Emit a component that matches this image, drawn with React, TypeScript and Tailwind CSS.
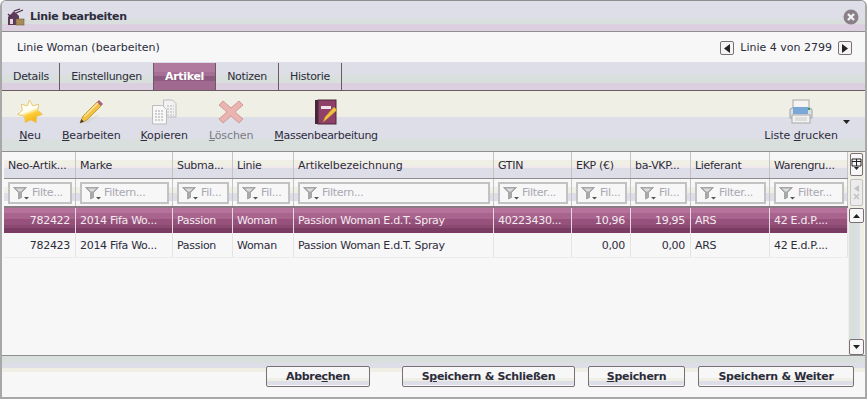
import type { ReactNode } from 'react'

const headers = ['Neo-Artik...', 'Marke', 'Subma...', 'Linie', 'Artikelbezeichnung', 'GTIN', 'EKP (€)', 'ba-VKP...', 'Lieferant', 'Warengru...']
const filters = ['Filte...', 'Filtern...', 'Fil...', 'Fil...', 'Filtern...', 'Filter...', 'Fil...', 'Fil...', 'Filter...', 'Filter...']

const rows = [
  ['782422', '2014 Fifa Wo...', 'Passion', 'Woman', 'Passion Woman E.d.T. Spray', '40223430...', '10,96', '19,95', 'ARS', '42 E.d.P....'],
  ['782423', '2014 Fifa Wo...', 'Passion', 'Woman', 'Passion Woman E.d.T. Spray', '', '0,00', '0,00', 'ARS', '42 E.d.P....'],
]

const gridCols = 'grid grid-cols-[72px_97px_60px_61px_200px_78px_59px_60px_79px_78px]'
const rightAligned = [0, 6, 7]

function Funnel() {
  return (
    <svg width="16" height="14" viewBox="0 0 16 14" className="shrink-0">
      <path d="M0.5 1.5h13l-5 5v5l-3 1.5v-6.500z" fill="#a9a9a9" stroke="#8a8a8a" strokeWidth="0.6" />
      <path d="M3 2.500h8l-3 3h-2z" fill="#dcdcdc" />
      <path d="M11 11h5l-2.500 2.500z" fill="#555" />
    </svg>
  )
}

function StarIcon() {
  return (
    <svg width="26" height="26" viewBox="0 0 26 26">
      <defs>
        <linearGradient id="starFill" x1="0.3" y1="0.2" x2="0.6" y2="0.9">
          <stop offset="0.4" stopColor="#fffdf0" />
          <stop offset="0.62" stopColor="#fbcf3a" />
          <stop offset="1" stopColor="#f6b417" />
        </linearGradient>
      </defs>
      <path
        d="M12.500 1l3.200 5.800 6-1.600-.9 6.200 4.700 3.900-5.800 2.200-.5 6.200-5.500-2.700-5.500 2.700-.5-6.200L.6 15.300l4.700-3.900-.9-6.200 6 1.600z"
        fill="url(#starFill)"
        stroke="#e3c877"
        strokeWidth="1"
        strokeLinejoin="round"
      />
    </svg>
  )
}

function PencilIcon() {
  return (
    <svg width="26" height="26" viewBox="0 0 26 26">
      <path d="M3 24l19-9-12 9z" fill="#d5d3d3" opacity="0.8" />
      <path d="M2 24l3-7L19 3l4 4L9 21z" fill="#f2c141" stroke="#b58a2a" strokeWidth="0.7" />
      <path d="M6 17L20 3l1 1L7 18z" fill="#fbe6a0" />
      <path d="M2 24l1.300-4 2.700 2.700z" fill="#4c3b2b" />
      <path d="M19 3l2-2 4 4-2 2z" fill="#a8607a" />
    </svg>
  )
}

function CopyIcon() {
  return (
    <svg width="26" height="26" viewBox="0 0 26 26">
      <path d="M12.500 1h9l3.500 3.500V18H12.500z" fill="#f2f2f2" stroke="#bcbcbc" />
      <path d="M16 7h7M16 10h7M16 13h7M16 16h7" stroke="#b5b5b5" strokeDasharray="2 1" />
      <path d="M1.500 6.500h10l4 4V25H1.500z" fill="#f7f7f7" stroke="#bcbcbc" />
      <path d="M4 12h9M4 15h9M4 18h9M4 21h9" stroke="#a8a8a8" strokeDasharray="2 1" />
    </svg>
  )
}

function DeleteIcon() {
  return (
    <svg width="26" height="26" viewBox="0 0 26 26">
      <path d="M5 2l8 7 8-7 4 4-8 7 8 7-4 4-8-7-8 7-4-4 8-7-8-7z" fill="#eab4b0" stroke="#cf9a98" strokeWidth="1" strokeLinejoin="round" />
    </svg>
  )
}

function BookIcon() {
  return (
    <svg width="24" height="26" viewBox="0 0 24 26">
      <rect x="1" y="1" width="3" height="24" fill="#3f2a34" />
      <rect x="4" y="1" width="18" height="24" fill="#8f3f68" stroke="#4a2a3a" />
      <rect x="7" y="7" width="10" height="3" fill="#efe3ea" />
      <path d="M9 23l2-5 9-10 3 3-10 9z" fill="#f2c141" stroke="#b58a2a" strokeWidth="0.5" />
    </svg>
  )
}

function PrinterIcon() {
  return (
    <svg width="26" height="26" viewBox="0 0 26 26">
      <rect x="5" y="1" width="16" height="8" fill="#f4f4f4" stroke="#a8a8a8" />
      <path d="M2 11q0-2 3-2h16q3 0 3 2v8H2z" fill="#dcdfe2" stroke="#a0a4a8" />
      <rect x="5" y="8" width="15" height="7" fill="#79a8d8" />
      <rect x="20" y="9" width="2" height="2" fill="#2e9e4e" />
      <rect x="4" y="16" width="18" height="8" fill="#f2f2f2" stroke="#a8a8a8" />
      <path d="M7 19h12M7 21h12" stroke="#c8c8c8" />
    </svg>
  )
}

function AppIcon() {
  return (
    <svg width="18" height="18" viewBox="0 0 18 18">
      <path d="M1 17V9l6-6 5 5v9z" fill="#5d3a58" />
      <path d="M7 3l6-2M9 5l7-3M4 9L1 6" stroke="#4d2a48" strokeWidth="1.300" />
      <rect x="9" y="11" width="8" height="6" fill="#a98a5a" stroke="#6f5a3a" strokeWidth="0.6" />
      <rect x="3" y="11" width="3" height="5" fill="#e6d8e0" />
    </svg>
  )
}

function CloseIcon() {
  return (
    <svg width="16" height="16" viewBox="0 0 16 16">
      <circle cx="8" cy="8" r="7.500" fill="#8a8088" />
      <path d="M5 5l6 6M11 5l-6 6" stroke="#f2f2f2" strokeWidth="2.400" />
    </svg>
  )
}

function NavButton({ dir }: { dir: 'left' | 'right' }) {
  return (
    <div className="flex h-[14px] w-[14px] items-center justify-center rounded-[2px] border border-[#7b6f76] bg-[#f4f4f4]">
      <svg width="6" height="9" viewBox="0 0 6 9">
        <path d={dir === 'left' ? 'M6 0v9L0 4.500z' : 'M0 0v9l6-4.500z'} fill="#222" />
      </svg>
    </div>
  )
}

function ToolButton({ icon, children, muted, className = '' }: { icon: ReactNode; children: ReactNode; muted?: boolean; className?: string }) {
  return (
    <div className={`flex flex-col items-center gap-[4px] ${muted ? 'text-[#777c80]' : 'text-[#2c2c3c]'} ${className}`}>
      <div className="flex h-[26px] items-center">{icon}</div>
      <span>{children}</span>
    </div>
  )
}

function FooterButton({ width, children }: { width: string; children: ReactNode }) {
  return (
    <div className={`${width} flex h-[21px] items-center justify-center rounded-[2px] border border-[#7b6f76] bg-[linear-gradient(#f7f7f7_0,#f7f7f7_11px,#f0efe6_11px,#f0efe6_14px,#dedee8_14px,#dedee8_18px,#f7f7f7_18px)] font-bold text-[#2c2c3c]`}>
      <span>{children}</span>
    </div>
  )
}

export default function App() {
  return (
    <div className="h-[400px] w-[867px] overflow-hidden bg-white font-['DejaVu_Sans',sans-serif] text-[11px] leading-[14px] tracking-[-0.3px] text-[#2c2c3c]">
      <div className="flex h-[399px] flex-col overflow-hidden rounded-t-[6px] border-x-2 border-t border-b-2 border-x-[#a8a8a8] border-t-[#8e8e8e] border-b-[#a8a8a8]">
        {/* title bar */}
        <div className="flex h-[31px] shrink-0 items-center justify-between border-b border-[#8e8e8e] bg-[linear-gradient(#dedee8_0,#dedee8_18px,#d8dfdd_18px,#d8dfdd_23px,#dccfe0_23px)] pr-[6px] pl-[5px]">
          <div className="flex items-center gap-[5px] pt-[2px]">
            <AppIcon />
            <span className="font-bold">Linie bearbeiten</span>
          </div>
          <div className="pt-[1px]">
            <CloseIcon />
          </div>
        </div>

        {/* header */}
        <div className="flex h-[30px] shrink-0 items-center justify-between bg-[#f7f7f7] pt-[2px] pr-[13px] pl-[15px] tracking-normal">
          <span>Linie Woman (bearbeiten)</span>
          <div className="flex items-center gap-[6px]">
            <NavButton dir="left" />
            <span>Linie 4 von 2799</span>
            <NavButton dir="right" />
          </div>
        </div>

        {/* tabs */}
        <div className="flex h-[29px] shrink-0 border-b border-[#6a5a62] bg-[linear-gradient(#dedee8_0,#dedee8_13px,#d8dfdd_13px,#d8dfdd_21px,#dccfe0_21px)] pt-[1px] pl-[1px]">
          <div className="flex w-[57px] items-center justify-center border-r border-[#6a5a62]">Details</div>
          <div className="flex w-[94px] items-center justify-center border-r border-[#6a5a62]">Einstellungen</div>
          <div className="flex w-[62px] items-center justify-center border-r border-[#6a5a62] bg-[linear-gradient(#b07a9e_0,#b07a9e_9px,#a86f96_9px,#a86f96_13px,#8e5a80_13px,#8e5a80_18px,#a06a90_18px)] font-bold text-white">Artikel</div>
          <div className="flex w-[63px] items-center justify-center border-r border-[#6a5a62]">Notizen</div>
          <div className="flex w-[63px] items-center justify-center border-r border-[#6a5a62]">Historie</div>
        </div>

        {/* toolbar */}
        <div className="flex h-[60px] shrink-0 items-start justify-between bg-[linear-gradient(#f0efe6_0,#f0efe6_26px,#dedee8_26px,#dedee8_48px,#d8dfdd_48px)] pt-[8px] pr-[15px] pl-[15px] tracking-[-0.1px]">
          <div className="flex gap-[21px]">
            <ToolButton icon={<StarIcon />} className="mr-[-2px]"><u>N</u>eu</ToolButton>
            <ToolButton icon={<PencilIcon />} className="mr-[-1px] tracking-[-0.2px]"><u>B</u>earbeiten</ToolButton>
            <ToolButton icon={<CopyIcon />}><u>K</u>opieren</ToolButton>
            <ToolButton icon={<DeleteIcon />} muted><u>L</u>öschen</ToolButton>
            <ToolButton icon={<BookIcon />} className="tracking-[-0.3px]"><u>M</u>assenbearbeitung</ToolButton>
          </div>
          <div className="flex items-start gap-[5px]">
            <ToolButton icon={<PrinterIcon />} className="tracking-normal">Liste <u>d</u>rucken</ToolButton>
            <svg width="7" height="4" viewBox="0 0 7 4" className="mt-[21px]">
              <path d="M0 0h7L3.500 4z" fill="#222" />
            </svg>
          </div>
        </div>

        {/* table */}
        <div className="flex h-[205px] shrink-0 border-y border-[#8e8e8e] bg-[#f7f7f7]">
          <div className="w-[846px] shrink-0 pl-[2px]">
            <div className={`${gridCols} h-[27px] border-b border-[#8e8e8e] bg-[linear-gradient(#f7f7f7_0,#f7f7f7_8px,#f0efe6_8px,#f0efe6_14px,#f0e8ec_14px,#f0e8ec_16px,#dedee8_16px)]`}>
              {headers.map((h, i) => (
                <div key={h} className={`flex items-center border-r border-[#c4c4c4] pt-[1px] pl-[4px] whitespace-nowrap ${i === 4 ? 'tracking-[-0.05px]' : ''}`}>{h}</div>
              ))}
            </div>
            <div className={`${gridCols} h-[29px] border-b-2 border-[#8a7a84] bg-[linear-gradient(#f7f7f7_0,#f7f7f7_8px,#f0efe6_8px,#f0efe6_14px,#dedee8_14px,#dedee8_22px,#f7f7f7_22px)]`}>
              {filters.map((f, i) => (
                <div key={i} className="border-r border-[#c4c4c4] pt-[3px] pr-[3px] pl-[4px]">
                  <div className="flex h-[22px] items-center gap-[3px] overflow-hidden border-2 border-[#c2c2c2] bg-[#f7f7f7] pl-[3px] whitespace-nowrap text-[#a8a8b0]">
                    <Funnel />
                    <span>{f}</span>
                  </div>
                </div>
              ))}
            </div>
            {rows.map((row, r) => (
              <div
                key={r}
                className={`${gridCols} h-[25px] ${r === 0 ? 'bg-[linear-gradient(#b5739c_0,#b5739c_5px,#a9648e_5px,#a9648e_11px,#96527c_11px,#96527c_17px,#8a4a70_17px,#8a4a70_20px,#7a3c62_20px)] text-[#f4eaf0]' : 'border-b border-[#ececec] pt-[1px]'}`}
              >
                {row.map((c, i) => (
                  <div
                    key={i}
                    className={`flex items-center border-r pr-[5px] pl-[4px] whitespace-nowrap ${r === 0 ? 'border-[#e6d8e0]' : 'border-[#e4e4e4]'} ${rightAligned.includes(i) ? 'justify-end' : ''}`}
                  >
                    {c}
                  </div>
                ))}
              </div>
            ))}
          </div>

          {/* side strip */}
          <div className="flex w-[16px] shrink-0 flex-col items-center bg-[#f0efe6]">
            <div className="mt-[1px] flex h-[23px] w-[13px] items-center justify-center rounded-[2px] border border-[#7b6f76] bg-[#f7f7f7]">
              <svg width="11" height="13" viewBox="0 0 11 13">
                <path d="M1 1h9v7H1zM1 3.500h9M5.500 1v7" fill="none" stroke="#222" />
                <path d="M3 9h5l-2.500 3z" fill="#222" />
              </svg>
            </div>
            <div className="mt-[3px] flex h-[27px] w-[13px] items-center justify-center rounded-[2px] border border-[#c2c2c2] bg-[#ececec]">
              <svg width="7" height="15" viewBox="0 0 7 15">
                <path d="M6 0v7L1 3.500z" fill="#c2c2c2" />
                <path d="M1 9l5 5M6 9l-5 5" stroke="#c2c2c2" strokeWidth="1.500" />
              </svg>
            </div>
            <div className="mt-[2px] flex w-[15px] flex-1 flex-col bg-[linear-gradient(90deg,#d8dfdd_0,#d8dfdd_8px,#dedee8_8px,#dedee8_11px,#f0efe6_11px)]">
              <div className="flex h-[15px] items-center justify-center rounded-[2px] border border-[#7b6f76] bg-[#f7f7f7]">
                <svg width="7" height="4" viewBox="0 0 7 4"><path d="M0 4h7L3.500 0z" fill="#222" /></svg>
              </div>
              <div className="flex-1" />
              <div className="flex h-[16px] items-center justify-center rounded-[2px] border border-[#7b6f76] bg-[#f7f7f7]">
                <svg width="7" height="4" viewBox="0 0 7 4"><path d="M0 0h7L3.500 4z" fill="#222" /></svg>
              </div>
            </div>
          </div>
        </div>

        {/* footer */}
        <div className="flex flex-1 items-start justify-end gap-[13px] bg-[linear-gradient(#d8dfdd_0,#d8dfdd_7px,#dedee8_7px,#dedee8_12px,#f0efe6_12px,#f0efe6_16px,#f7f7f7_16px)] pt-[10px] pr-[11px]">
          <FooterButton width="w-[104px] mr-[19px]">Abbre<u>c</u>hen</FooterButton>
          <FooterButton width="w-[173px]">S<u>p</u>eichern &amp; Schließen</FooterButton>
          <FooterButton width="w-[97px]"><u>S</u>peichern</FooterButton>
          <FooterButton width="w-[156px]">Speichern &amp; <u>W</u>eiter</FooterButton>
        </div>
      </div>
    </div>
  )
}
